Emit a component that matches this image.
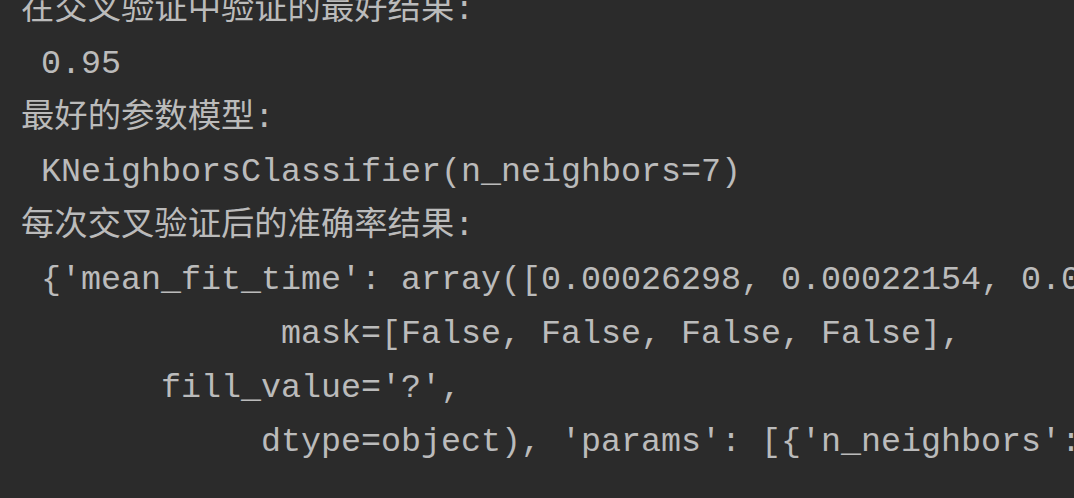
import React from 'react'

const lines: string[] = [
  '在交叉验证中验证的最好结果:',
  ' 0.95',
  '最好的参数模型:',
  ' KNeighborsClassifier(n_neighbors=7)',
  '每次交叉验证后的准确率结果:',
  " {'mean_fit_time': array([0.00026298, 0.00022154, 0.00021505, 0.00021195]),",
  '             mask=[False, False, False, False],',
  "       fill_value='?',",
  "            dtype=object), 'params': [{'n_neighbors': 1}, {'n_neighbors': 3}]}",
]

export default function App() {
  return (
    <div className="h-[498px] w-[1074px] overflow-hidden bg-[#2b2b2b]">
      <pre
        className="-mt-[17px] pl-[21px] text-[33.33px] leading-[54px] text-[#bbbbbb] whitespace-pre"
        style={{ fontFamily: '"Liberation Mono", "Noto Sans CJK SC", monospace' }}
      >
        {lines.map((line, i) => (
          <div key={i}>{line}</div>
        ))}
      </pre>
    </div>
  )
}
